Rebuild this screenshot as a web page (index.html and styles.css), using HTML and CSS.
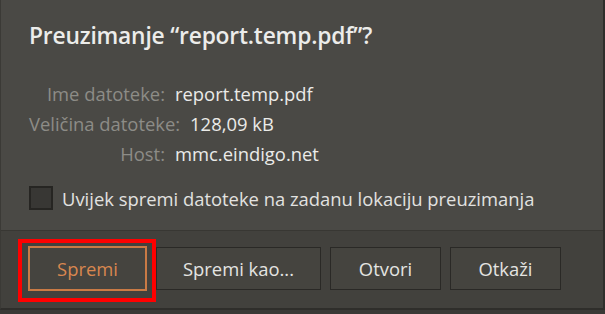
FILE: index.html
```html
<!DOCTYPE html>
<html>

<head>
    <title>Preuzimanje</title>
    <meta charset="UTF-8">
    <meta name="viewport" content="width=device-width, initial-scale=1.0">
    <link rel="stylesheet" href="styles.css">
</head>

<body>
    <div class="dialog">
        <div class="main">
            <h1 class="title">Preuzimanje “report.temp.pdf”?</h1>
            <div class="info">
                <div class="row">
                    <span class="label">Ime datoteke:</span>
                    <span class="value">report.temp.pdf</span>
                </div>
                <div class="row">
                    <span class="label">Veličina datoteke:</span>
                    <span class="value">128,09 kB</span>
                </div>
                <div class="row">
                    <span class="label">Host:</span>
                    <span class="value">mmc.eindigo.net</span>
                </div>
            </div>
            <label class="check">
                <span class="box"></span>
                <span>Uvijek spremi datoteke na zadanu lokaciju preuzimanja</span>
            </label>
        </div>
        <div class="footer">
            <button type="button" class="btn primary">Spremi</button>
            <button type="button" class="btn wide">Spremi kao...</button>
            <button type="button" class="btn">Otvori</button>
            <button type="button" class="btn">Otkaži</button>
        </div>
    </div>
    <div class="highlight"></div>
</body>

</html>
```

FILE: styles.css
```css
* {
    margin: 0;
    padding: 0;
    box-sizing: border-box;
}

body {
    font-family: "Open Sans", "Noto Sans", sans-serif;
    background-color: #3a3936;
    color: #e6e6e4;
    width: 605px;
    height: 314px;
    overflow: hidden;
}

.dialog {
    width: 605px;
    height: 310px;
    background-color: #4a4945;
    border-left: 1px solid #3b3a36;
    border-right: 2px solid #2f2e2b;
    border-bottom: 2px solid #2f2e2b;
}

.main {
    height: 230px;
    padding-left: 28px;
    overflow: hidden;
}

.title {
    font-size: 22.8px;
    font-weight: 600;
    line-height: 28px;
    padding-top: 22px;
    color: #ececea;
    letter-spacing: -0.2px;
}

.info {
    margin-top: 28px;
}

.row {
    display: flex;
    height: 30px;
    align-items: center;
    font-size: 18.4px;
    white-space: nowrap;
}

.label {
    min-width: 136px;
    text-align: right;
    color: #8d8c87;
}

.value {
    margin-left: 10px;
    color: #ebebe9;
}

.check {
    display: flex;
    align-items: center;
    margin-top: 18px;
    height: 24px;
    font-size: 18.4px;
    color: #e2e2e0;
    white-space: nowrap;
}

.box {
    width: 24px;
    height: 24px;
    border: 2px solid #262522;
    background-color: #383734;
    margin-right: 9px;
    flex-shrink: 0;
}

.footer {
    height: 78px;
    background-color: #42413d;
    border-top: 1px solid #383733;
    display: flex;
    align-items: center;
    gap: 9px;
    padding-left: 27px;
    padding-bottom: 2px;
}

.btn {
    font-family: inherit;
    font-size: 18.4px;
    height: 43px;
    width: 111px;
    background-color: #45443f;
    color: #e4e4e2;
    border: 1px solid #2a2926;
}

.btn.wide {
    width: 165px;
}

.btn.primary {
    width: 119px;
    height: 45px;
    border: 2px solid #c97a45;
    color: #d9874f;
}

.highlight {
    position: absolute;
    left: 18px;
    top: 239px;
    width: 138px;
    height: 63px;
    border: 4px solid #ff0000;
}
```
